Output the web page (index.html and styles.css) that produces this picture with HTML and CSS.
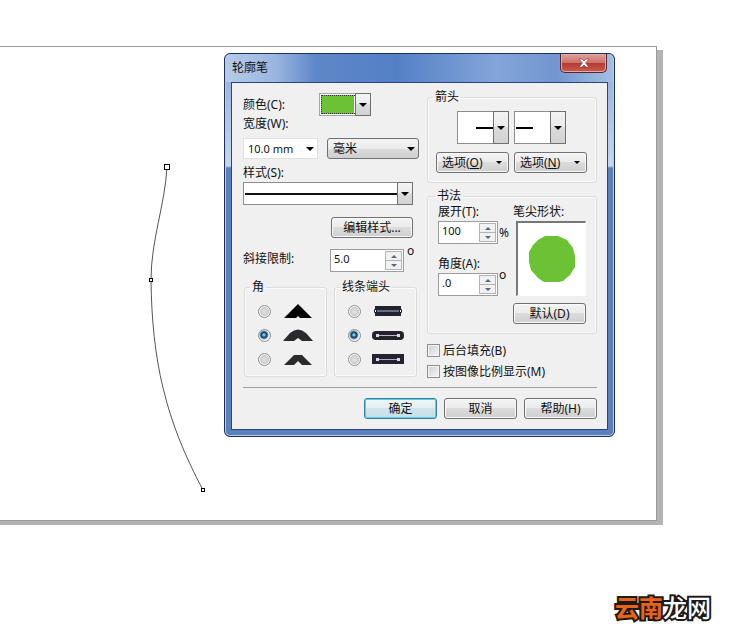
FILE: index.html
```
<!DOCTYPE html>
<html lang="zh-CN">
<head>
    <meta charset="UTF-8">
    <meta name="viewport" content="width=device-width, initial-scale=1.0">
    <title>轮廓笔</title>
    <link rel="stylesheet" href="styles.css">
</head>
<body>

    <main class="paper">
        <svg class="curve" width="80" height="350" viewBox="0 0 80 350">
            <path d="M27 17C25 55 11 90 11 130C12 210 25 269 63 340" fill="none" stroke="#555"/>
            <rect x="24.5" y="14.500" width="5" height="5" fill="#fff" stroke="#000"/>
            <rect x="9.500" y="128.500" width="3" height="3" fill="#fff" stroke="#000"/>
            <rect x="61.500" y="338.500" width="3" height="3" fill="#fff" stroke="#000"/>
        </svg>
    </main>

    <footer class="brand"><span>云南</span>龙网</footer>

    <div class="dialog" role="dialog" aria-labelledby="dialogTitle">
        <div class="titlebar">
            <div class="title" id="dialogTitle">轮廓笔</div>
            <button class="close" type="button" aria-label="关闭">
                <svg width="12" height="10" viewBox="0 0 12 10">
                    <path d="M1 1h3l2 2 2-2h3L7.500 5 11 9H8L6 7 4 9H1l3.500-4z" fill="#fff" stroke="#6d3434" stroke-width=".6"/>
                </svg>
            </button>
        </div>

        <form class="client">
            <div class="columns">
                <div class="left">
                    <div class="row color-row">
                        <label for="color">颜色(C):</label>
                        <div class="picker color"><select id="color"><option></option></select></div>
                    </div>
                    <label class="line" for="width">宽度(W):</label>
                    <div class="row width-row">
                        <div class="drop plain"><select id="width"><option>10.0 mm</option></select></div>
                        <div class="drop unit"><select aria-label="单位"><option>毫米</option></select></div>
                    </div>
                    <label class="line style-label" for="style">样式(S):</label>
                    <div class="picker style"><select id="style"><option></option></select></div>
                    <button class="btn edit" type="button">编辑样式...</button>
                    <div class="row miter">
                        <label for="miter">斜接限制:</label>
                        <div class="spin wide">
                            <input id="miter" type="text" value="5.0">
                            <div class="steps"><button type="button" aria-label="增加"></button><button type="button" aria-label="减少"></button></div>
                        </div>
                        <span class="deg">o</span>
                    </div>

                    <div class="row groups">
                        <fieldset class="shapes">
                            <legend>角</legend>
                            <label>
                                <input type="radio" name="corner" aria-label="尖角">
                                <svg width="32" height="16" viewBox="0 0 32 16"><path d="M2 15L16 1l14 14H18l-2-2-2 2z" fill="#000"/></svg>
                            </label>
                            <label>
                                <input type="radio" name="corner" aria-label="圆角" checked>
                                <svg width="32" height="16" viewBox="0 0 32 16"><path d="M1 14L8 6q8-7 16 0l7 8H20l-4-3-4 3z" fill="#2b2b2d"/></svg>
                            </label>
                            <label>
                                <input type="radio" name="corner" aria-label="平角">
                                <svg width="32" height="16" viewBox="0 0 32 16"><path d="M2 14L12 4h8l10 10H20l-4-4-4 4z" fill="#2b2b2d"/></svg>
                            </label>
                        </fieldset>
                        <fieldset class="shapes">
                            <legend>线条端头</legend>
                            <label>
                                <input type="radio" name="cap" aria-label="方形端头">
                                <svg width="32" height="16" viewBox="0 0 32 16"><path d="M3 3h26v10H3z" fill="#22222c"/><path d="M4 8h24" stroke="#a9b6dd"/><path d="M2.500 6.500h2v3h-2zM27.500 6.500h2v3h-2z" fill="#fff" stroke="#18183c"/></svg>
                            </label>
                            <label>
                                <input type="radio" name="cap" aria-label="圆形端头" checked>
                                <svg width="32" height="16" viewBox="0 0 32 16"><rect y="4" width="32" height="9" rx="4" fill="#252327"/><path d="M5 8.500h22" stroke="#c3b4d8"/><path d="M4 7h3v3H4zM25 7h3v3h-3z" fill="#ded5ec"/></svg>
                            </label>
                            <label>
                                <input type="radio" name="cap" aria-label="延伸端头">
                                <svg width="32" height="16" viewBox="0 0 32 16"><path d="M0 3h32v10H0z" fill="#252230"/><path d="M5 8.500h22" stroke="#b4a9d5"/><path d="M4 7h3v3H4zM25 7h3v3h-3z" fill="#ded5ec"/></svg>
                            </label>
                        </fieldset>
                    </div>
                </div>

                <div class="right">
                    <fieldset class="arrows">
                        <legend>箭头</legend>
                        <div class="picker start"><select aria-label="起点箭头"><option></option></select></div>
                        <div class="picker end"><select aria-label="终点箭头"><option></option></select></div>
                        <button class="btn menu" type="button"><span>选项(<u>O</u>)</span></button>
                        <button class="btn menu" type="button"><span>选项(<u>N</u>)</span></button>
                    </fieldset>

                    <fieldset class="calligraphy">
                        <legend>书法</legend>
                        <div class="nib-values">
                            <label for="stretch">展开(T):</label>
                            <div class="row">
                                <div class="spin">
                                    <input id="stretch" type="text" value="100">
                                    <div class="steps"><button type="button" aria-label="增加"></button><button type="button" aria-label="减少"></button></div>
                                </div>
                                <span class="percent">%</span>
                            </div>
                            <label class="angle-label" for="angle">角度(A):</label>
                            <div class="row">
                                <div class="spin">
                                    <input id="angle" type="text" value=".0">
                                    <div class="steps"><button type="button" aria-label="增加"></button><button type="button" aria-label="减少"></button></div>
                                </div>
                                <span class="deg">o</span>
                            </div>
                        </div>
                        <div class="nib">
                            <div>笔尖形状:</div>
                            <div class="preview">
                                <svg width="48" height="48" viewBox="0 0 48 48"><path d="M17 1h13l9 4 6 8 2 8v11l-5 8-7 6-4 1H16l-6-4-7-8-2-8V17l4-7 5-5z" fill="#6bc235"/></svg>
                            </div>
                            <button class="btn" type="button">默认(D)</button>
                        </div>
                    </fieldset>

                    <label class="check"><input type="checkbox">后台填充(B)</label>
                    <label class="check"><input type="checkbox">按图像比例显示(M)</label>
                </div>
            </div>

            <div class="actions">
                <button class="btn default" type="button">确定</button>
                <button class="btn" type="button">取消</button>
                <button class="btn" type="button">帮助(H)</button>
            </div>
        </form>
    </div>

</body>
</html>
```
FILE: styles.css
```
*, *::before, *::after {
    box-sizing: border-box;
}

body {
    display: flex;
    flex-direction: column;
    min-height: 100vh;
    margin: 0;
    background: #fff;
    color: #111;
    font: 12px/16px "Noto Sans", "Noto Sans CJK SC", sans-serif;
}

button, input, select {
    margin: 0;
    padding: 0;
    color: inherit;
    font: inherit;
}

/* Drawing page */
.paper {
    position: relative;
    flex: 1;
    margin: 46px 91px 0 0;
    border: 1px solid #9a9a9a;
    border-left: 0;
    box-shadow: 6px 4px 0 #b3b3b3, 0 4px 0 #b3b3b3;
}

.curve {
    position: absolute;
    top: 103px;
    left: 140px;
}

.brand {
    padding: 70px 37px 13px 0;
    text-align: right;
    color: #fff;
    font: 500 24px/32px "Noto Sans CJK SC", sans-serif;
    -webkit-text-stroke: 4px #1c1917;
    paint-order: stroke fill;
}

.brand span {
    color: #e8641b;
    font-weight: bold;
}

/* Dialog window */
.dialog {
    position: absolute;
    top: 53px;
    left: 224px;
    width: 391px;
    padding: 0 6px 6px;
    border: 1px solid #1d2f5c;
    border-radius: 6px;
    background: linear-gradient(#8dabd9, #c5d8ee 112px, #5b80ba 114px, #5b80ba);
    box-shadow: inset 0 0 0 1px #b4cdec;
}

.titlebar {
    display: flex;
    justify-content: space-between;
    align-items: flex-start;
    height: 28px;
    margin: 0 -5px;
    padding: 0 6px;
    border-radius: 5px 5px 0 0;
    background: linear-gradient(90deg, #b5cbe9, #9ab5df 50px, #5e87c8 90px, #5480c5 170px, #83a5d9 270px, #7196d0 330px, #a4bfe3);
}

.title {
    padding-top: 6px;
    line-height: 16px;
}

.close {
    display: flex;
    align-items: center;
    justify-content: center;
    width: 47px;
    height: 19px;
    border: 1px solid #56262b;
    border-top: 0;
    border-radius: 0 0 5px 5px;
    background: linear-gradient(#dda198, #cc7067 9px, #b33a31 9px, #ca5b4c);
    box-shadow: inset 0 0 0 1px #e4aaa3;
}

.client {
    padding: 10px 10px 10px 11px;
    border: 1px solid #2c437d;
    background: #f0f0f0;
}

.columns {
    display: grid;
    grid-template-columns: 175px 1fr;
    gap: 9px;
    padding-bottom: 5px;
}

.row {
    display: flex;
}

.line {
    display: block;
}

/* Push buttons */
.btn {
    width: 73px;
    height: 21px;
    border: 1px solid #707070;
    border-radius: 3px;
    background: linear-gradient(#f3f3f3, #ebebeb 50%, #dcdcdc 50%, #cfcfcf);
    box-shadow: inset 0 0 0 1px #fafafa;
    line-height: 16px;
}

.btn.default {
    border-color: #37839c;
    background: linear-gradient(#eef6f8, #e2eff3 50%, #d0e5eb 50%, #c5dfe6);
    box-shadow: inset 0 0 0 1px #5fcbe4;
}

/* Drop-downs */
select {
    display: block;
    width: 100%;
    height: 100%;
    border: 1px solid #8c8c8c;
    border-radius: 0;
    background: #fff;
    appearance: none;
}

.picker, .drop {
    position: relative;
}

.picker::after {
    content: "";
    position: absolute;
    top: 0;
    right: 0;
    width: 16px;
    height: 100%;
    border: 1px solid #707070;
    background: linear-gradient(#f3f3f3, #ebebeb 50%, #dcdcdc 50%, #d2d2d2);
    pointer-events: none;
}

.picker::before, .drop::after, .menu::after {
    content: "";
    border: 4px solid transparent;
    border-top-color: #000;
    border-bottom-width: 0;
}

.picker::before, .drop::after {
    position: absolute;
    z-index: 1;
    top: calc(50% - 2px);
    right: 4px;
    pointer-events: none;
}

.color {
    width: 52px;
    height: 23px;
}

.color select {
    border-color: #a5a5a5;
    background: linear-gradient(#6bc235, #6bc235) 1px 1px / 33px 19px no-repeat #fff;
    outline: 1px dotted #333;
    outline-offset: -3px;
}

.drop {
    height: 21px;
}

.plain {
    width: 75px;
}

.plain select {
    padding-left: 4px;
    border-color: #e0e0e0;
    font-size: 11px;
}

.unit {
    width: 92px;
}

.unit select {
    padding-left: 5px;
    border-color: #707070;
    border-radius: 3px;
    background: linear-gradient(#f3f3f3, #ebebeb 50%, #dcdcdc 50%, #cfcfcf);
}

.style {
    width: 170px;
    height: 23px;
}

.style select {
    background: linear-gradient(#111, #111) 1px 10px / 152px 2px no-repeat #fff;
}

/* Left column */
.color-row label {
    width: 76px;
    padding-top: 4px;
}

.width-row {
    justify-content: space-between;
    margin-top: 6px;
    margin-right: -1px;
}

.style-label {
    margin: 6px 0 1px;
}

.edit {
    display: block;
    width: 82px;
    margin: 12px 0 0 88px;
}

.miter {
    margin-top: 11px;
}

.miter label {
    width: 87px;
    padding-top: 2px;
}

/* Spin boxes */
.spin {
    display: flex;
    width: 60px;
    height: 23px;
    padding: 1px;
    border: 1px solid #9c9c9c;
    background: #fff;
}

.spin.wide {
    width: 74px;
}

.spin input {
    flex: 1;
    min-width: 0;
    height: 16px;
    padding-left: 2px;
    border: 0;
    background: none;
    font-size: 11px;
}

.steps {
    display: flex;
    flex-direction: column;
    width: 17px;
}

.steps button {
    display: flex;
    flex: 1;
    align-items: center;
    justify-content: center;
    border: 1px solid #b3b3b3;
    background: #f1f1f1;
}

.steps button::before {
    content: "";
    border: 3px solid transparent;
    border-top-width: 0;
    border-bottom-color: #566681;
}

.steps button + button {
    border-top: 0;
}

.steps button + button::before {
    border-top: 3px solid #566681;
    border-bottom: 0;
}

.deg {
    margin: -6px 0 0 1px;
}

.miter .deg {
    margin-left: 3px;
}

.percent {
    margin: 4px 0 0 1px;
}

/* Group boxes */
fieldset {
    min-width: 0;
    margin: 0;
    padding: 0;
    border: 1px solid #dcdcdc;
    border-radius: 3px;
    box-shadow: inset 0 0 0 1px #fafafa;
}

legend {
    margin-left: 5px;
    padding: 0 2px;
}

.groups {
    gap: 7px;
    margin: 7px 0 0 1px;
}

.shapes {
    width: 83px;
    padding-bottom: 5px;
}

.shapes label {
    display: flex;
    align-items: center;
    gap: 11px;
    height: 24px;
    padding-left: 13px;
}

.shapes label:first-of-type {
    margin-top: 4px;
}

input[type="radio"] {
    width: 13px;
    height: 13px;
    border: 1px solid #8e8f8f;
    border-radius: 50%;
    background: radial-gradient(circle, #dcdcdc 2px, #c9c9c9 4px, #f6f6f6 5px);
    appearance: none;
}

input[type="radio"]:checked {
    background: radial-gradient(circle at 45% 45%, #7cc8e8 1px, #1f5c87 2px, #16476a 3px, #eef3f6 5px);
}

/* Right column */
.right {
    padding-top: 4px;
}

.right fieldset {
    margin-top: -8px;
}

.arrows {
    display: grid;
    grid-template-columns: 73px 73px;
    gap: 8px 5px;
    padding: 6px 0 9px 8px;
}

.right legend {
    margin-left: -3px;
}

.arrows .picker {
    width: 52px;
    height: 33px;
}

.start {
    justify-self: end;
}

.end {
    justify-self: start;
}

.start select {
    background: linear-gradient(#000, #000) 18px 15px / 17px 2px no-repeat #fff;
}

.end select {
    background: linear-gradient(#000, #000) 1px 15px / 17px 2px no-repeat #fff;
}

.menu {
    display: flex;
    align-items: center;
    justify-content: space-between;
    padding: 0 6px 0 5px;
}

.menu::after {
    border-width: 3px;
    border-bottom-width: 0;
}

.right .calligraphy {
    margin-top: 5px;
}

.calligraphy {
    display: flex;
    gap: 3px;
    padding: 0 9px 9px 10px;
}

.nib-values {
    width: 72px;
}

.nib-values label {
    display: block;
    margin-bottom: 1px;
}

.nib-values .angle-label {
    margin-top: 12px;
}

.preview {
    display: flex;
    align-items: center;
    justify-content: center;
    width: 70px;
    height: 75px;
    margin: 1px 0 7px 3px;
    border: 2px solid #777;
    border-right: 1px solid #fff;
    border-bottom: 1px solid #fff;
    background: #fff;
}

.check {
    display: flex;
    align-items: center;
    gap: 3px;
    height: 21px;
}

fieldset + .check {
    margin-top: 6px;
}

input[type="checkbox"] {
    width: 13px;
    height: 13px;
    border: 1px solid #8e8f8f;
    background: linear-gradient(135deg, #cbcfd5, #f6f6f6);
    box-shadow: inset 0 0 0 1px #f4f4f4;
    appearance: none;
}

/* Bottom buttons */
.actions {
    display: flex;
    justify-content: flex-end;
    gap: 7px;
    padding-top: 10px;
    border-top: 1px solid #9aa3a3;
}
```
